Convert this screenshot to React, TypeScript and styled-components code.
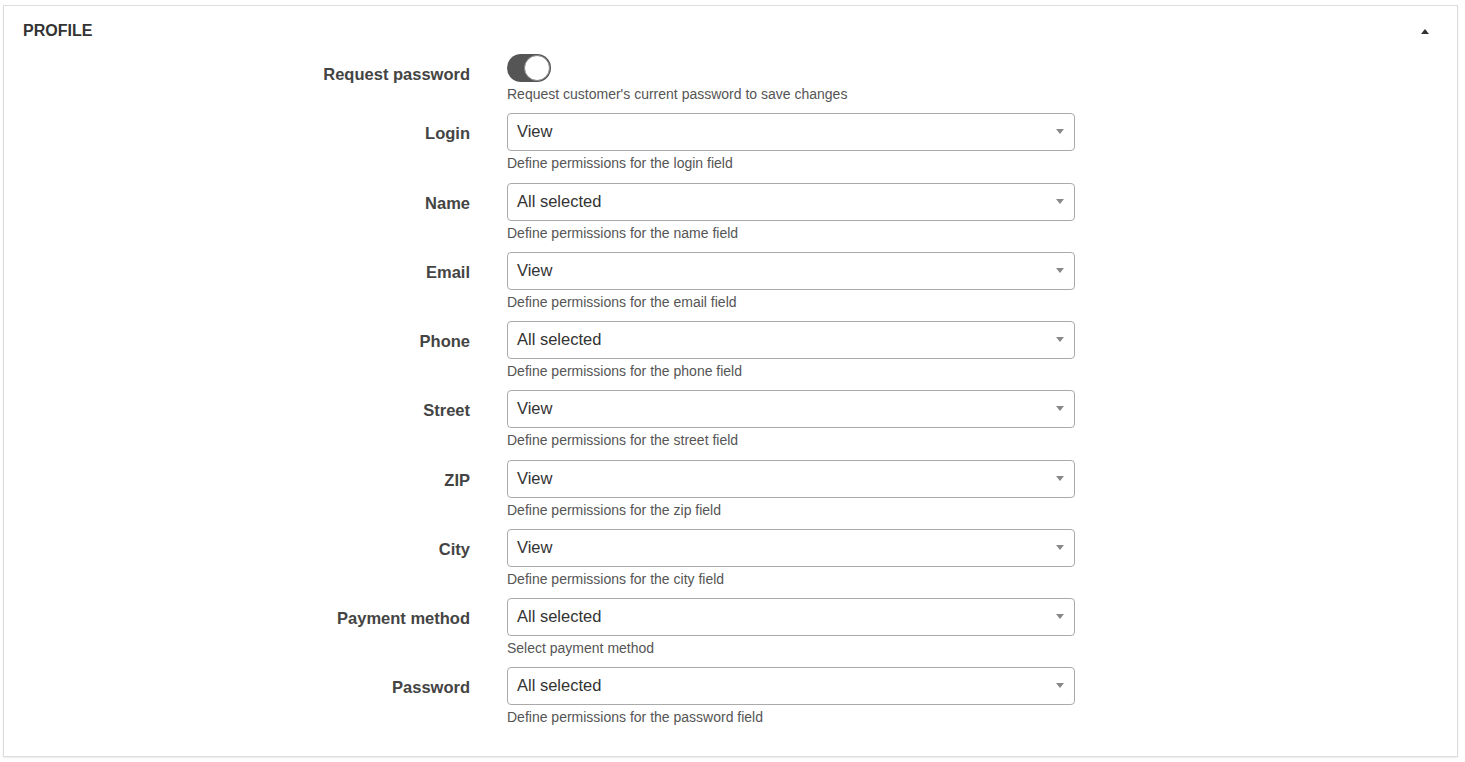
import React from 'react';
import styled, { createGlobalStyle } from 'styled-components';

const GlobalStyle = createGlobalStyle`
  html, body {
    margin: 0;
    padding: 0;
    background: #fff;
  }
  body {
    padding: 5px 7px 5px 3px;
    font-family: "Liberation Sans", Arial, sans-serif;
    color: #333;
  }
`;

const Card = styled.div`
  border: 1px solid #ddd;
  box-shadow: 0 1px 2px rgba(0, 0, 0, 0.08);
  background: #fff;
  height: 752px;
  box-sizing: border-box;
`;

const CardHeader = styled.div`
  display: flex;
  align-items: center;
  justify-content: space-between;
  height: 48px;
  padding: 2px 28px 0 19px;
  box-sizing: border-box;
`;

const Title = styled.h3`
  margin: 0;
  font-size: 16px;
  font-weight: 700;
  color: #333;
`;

const Caret = styled.span<{ $color?: string; $up?: boolean }>`
  display: inline-block;
  width: 0;
  height: 0;
  border-left: 4px solid transparent;
  border-right: 4px solid transparent;
  ${p => (p.$up
    ? `border-bottom: 5px solid ${p.$color || '#333'};`
    : `border-top: 5px solid ${p.$color || '#333'};`)}
`;

const Body = styled.div`
  display: flex;
  flex-direction: column;
  gap: 10px;
`;

const Row = styled.div`
  display: grid;
  grid-template-columns: 466px 568px;
  column-gap: 37px;
`;

const Label = styled.label`
  text-align: right;
  font-size: 16.5px;
  font-weight: 700;
  color: #444;
  line-height: 20px;
  padding-top: 10px;
`;

const Field = styled.div`
  display: flex;
  flex-direction: column;
`;

const Help = styled.div`
  margin-top: 4px;
  font-size: 14px;
  line-height: 17.25px;
  color: #555;
`;

const Select = styled.div`
  height: 38px;
  box-sizing: border-box;
  border: 1px solid #aaa;
  border-radius: 4px;
  display: flex;
  align-items: center;
  justify-content: space-between;
  padding: 0 10px 1px 9px;
  font-size: 16.5px;
  color: #333;
  background: #fff;
`;

const Toggle = styled.div<{ $on?: boolean }>`
  width: 44px;
  height: 28px;
  border-radius: 14px;
  background: ${p => (p.$on ? '#555' : '#ccc')};
  position: relative;
  box-sizing: border-box;
`;

const Knob = styled.span<{ $on?: boolean }>`
  position: absolute;
  top: 1px;
  left: ${p => (p.$on ? '17px' : '1px')};
  width: 26px;
  height: 26px;
  border-radius: 50%;
  background: #fff;
  box-sizing: border-box;
  border: 1px solid #888;
`;

const fields = [
  { label: 'Login', value: 'View', help: 'Define permissions for the login field' },
  { label: 'Name', value: 'All selected', help: 'Define permissions for the name field' },
  { label: 'Email', value: 'View', help: 'Define permissions for the email field' },
  { label: 'Phone', value: 'All selected', help: 'Define permissions for the phone field' },
  { label: 'Street', value: 'View', help: 'Define permissions for the street field' },
  { label: 'ZIP', value: 'View', help: 'Define permissions for the zip field' },
  { label: 'City', value: 'View', help: 'Define permissions for the city field' },
  { label: 'Payment method', value: 'All selected', help: 'Select payment method' },
  { label: 'Password', value: 'All selected', help: 'Define permissions for the password field' },
];

export default function App() {
  return (
    <>
      <GlobalStyle />
      <Card>
        <CardHeader>
          <Title>PROFILE</Title>
          <Caret $up />
        </CardHeader>
        <Body>
          <Row>
            <Label>Request password</Label>
            <Field>
              <Toggle $on>
                <Knob $on />
              </Toggle>
              <Help>Request customer's current password to save changes</Help>
            </Field>
          </Row>
          {fields.map(f => (
            <Row key={f.label}>
              <Label>{f.label}</Label>
              <Field>
                <Select>
                  <span>{f.value}</span>
                  <Caret $color="#888" />
                </Select>
                <Help>{f.help}</Help>
              </Field>
            </Row>
          ))}
        </Body>
      </Card>
    </>
  );
}
